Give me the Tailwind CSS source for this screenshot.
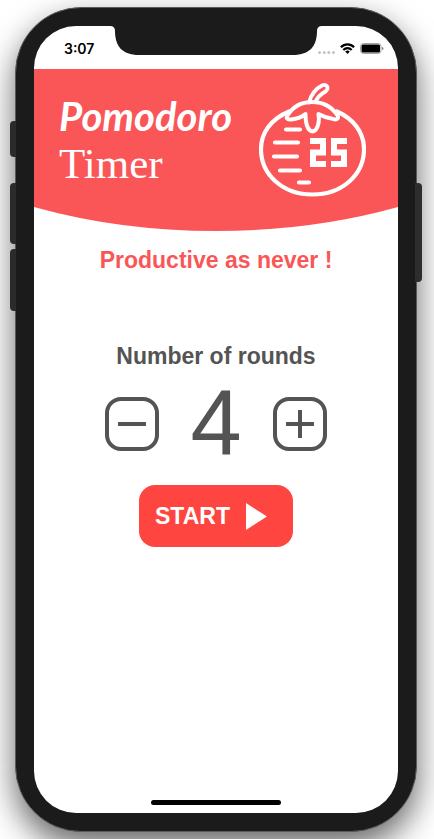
<!DOCTYPE html>
<html lang="en">
<head>
<meta charset="utf-8">
<meta name="viewport" content="width=device-width, initial-scale=1">
<title>Pomodoro Timer</title>
<script src="https://cdn.jsdelivr.net/npm/@tailwindcss/browser@4"></script>
</head>
<body class="flex min-h-screen overflow-hidden bg-white pt-[7px] pr-[17px] pb-[7px] pl-[15px] font-['Liberation_Sans',Arial,sans-serif] text-[#545454]">
<div class="relative flex flex-1 rounded-[66px] border border-[#5a5a5a] bg-[#1b1b1b] p-[18px] shadow-[0_14px_32px_rgba(0,0,0,0.6)]">
  <!-- side buttons -->
  <span class="absolute top-[113px] -left-[6px] h-9 w-[6px] rounded-l-sm bg-[#2b2b2b]"></span>
  <span class="absolute top-[175px] -left-[6px] h-[61px] w-[6px] rounded-l-sm bg-[#2b2b2b]"></span>
  <span class="absolute top-[241px] -left-[6px] h-[62px] w-[6px] rounded-l-sm bg-[#2b2b2b]"></span>
  <span class="absolute top-[175px] -right-[6px] h-[99px] w-[7px] rounded-r-sm bg-[#2d2d2d]"></span>

  <div class="relative flex flex-1 flex-col overflow-hidden rounded-[42px] bg-white">
    <svg class="absolute top-0 left-1/2 h-[29px] w-[212px] -translate-x-1/2" viewBox="0 0 212 29" fill="#1b1b1b" aria-hidden="true">
      <path d="M0 0H212Q207 0 207 5C207 20 200 29 183 29H29C12 29 5 20 5 5Q5 0 0 0Z"/>
    </svg>
    <div class="flex h-[43px] items-center justify-between pt-[2px] pr-[14px] pl-[30px]">
      <time class="font-['Inter','Liberation_Sans',sans-serif] text-[14px] font-semibold text-black">3:07</time>
      <div class="flex items-center gap-[5px]">
        <svg class="mt-[7px] h-[3px] w-[17px]" viewBox="0 0 17 3" fill="#c4c4c4" aria-hidden="true"><circle cx="1.5" cy="1.5" r="1.5"/><circle cx="6.2" cy="1.5" r="1.5"/><circle cx="10.8" cy="1.5" r="1.5"/><circle cx="15.5" cy="1.5" r="1.5"/></svg>
        <svg class="h-[11px] w-[15px]" viewBox="0 0 15 11" fill="none" stroke="#000" stroke-width="2.2" aria-hidden="true"><path d="M.9 4.2C4.600 .3 10.400 .3 14.100 4.200M3.300 6.900C5.700 4.400 9.300 4.400 11.700 6.900"/><path d="M5.200 8.500Q7.500 6.600 9.800 8.500L7.500 10.900Z" fill="#000" stroke="none"/></svg>
        <svg class="h-[11px] w-6" viewBox="0 0 24 11" aria-hidden="true"><rect x=".5" y=".5" width="20.500" height="10" rx="3" fill="none" stroke="#a2a2a2"/><rect x="1.500" y="1.500" width="18.500" height="8" rx="1.500"/><path d="M22 3.700Q23.500 4.300 23.500 5.500T22 7.300Z" fill="#8a8a8a"/></svg>
      </div>
    </div>

    <header class="flex h-[138px] items-start justify-between bg-[#fa5658] pr-8 pl-[25px] text-white">
      <h1 class="pt-[23px]">
        <span class="block font-['Lato',sans-serif] text-[40px] leading-[48px] font-bold italic">Pomodoro</span>
        <span class="block font-['Liberation_Serif',serif] text-[43px] leading-[48px] font-normal">Timer</span>
      </h1>
      <svg class="mt-[11px] h-[118px] w-[108px]" viewBox="258 80 108 118" fill="none" stroke="#fff" stroke-width="4.200" stroke-linecap="round" stroke-linejoin="round" aria-hidden="true">
        <path d="M289 111.500C271 119 261 133 261 149C261 175 283 194.500 312.500 194.500S364 175 364 149C364 133 354 119 337 111.500"/>
        <path d="M309 102.500C311 95 315 89 322 85.500C327 83.500 329.500 88 325.500 91.500C320 94.500 317 98 315.500 102" stroke-width="3.800"/>
        <path d="M287.500 115.500C293 106.500 302 102 312 102C323 102 332 107 337.500 115.500C339.500 119 336 120.500 331.500 118.500C326 117.500 322 116 318.500 114C319.500 120 318.500 127 315.500 130C313.500 131.800 311.500 131.800 309.500 130C306.500 127 305.500 120 305.500 114C301 118 296 119 291 119.500C287 120 285.800 118 287.500 115.500Z" stroke-width="4"/>
        <path d="M286 129.500H300M275 142.500H298M274 156.500H297M280 170.500H300M299 182.500H309"/>
        <path d="M310 141H323V152.500H313V164H326M347 141H334V152.500H344V164H331" stroke-width="6" stroke-linecap="butt" stroke-linejoin="miter"/>
      </svg>
    </header>
    <svg class="h-6 w-full shrink-0" viewBox="0 0 364 24" preserveAspectRatio="none" fill="#fa5658" aria-hidden="true"><path d="M0 0H364Q278 24 182 24T0 0Z"/></svg>

    <main class="flex flex-1 flex-col items-center text-[23px] leading-8 font-bold">
      <p class="mt-[13px] text-[#fa5658]">Productive as never !</p>
      <h2 class="mt-16" id="rounds">Number of rounds</h2>
      <div class="flex items-center gap-[31px]" role="group" aria-labelledby="rounds">
        <button type="button" aria-label="Fewer rounds" class="flex h-[54px] w-[54px] items-center justify-center rounded-[16px] border-4 border-[#545454]">
          <svg class="h-7 w-7" viewBox="0 0 28 28" stroke="#545454" stroke-width="4" aria-hidden="true"><path d="M0 14H28"/></svg>
        </button>
        <output class="pb-1 text-[92px] leading-[100px] font-normal">4</output>
        <button type="button" aria-label="More rounds" class="flex h-[54px] w-[54px] items-center justify-center rounded-[16px] border-4 border-[#545454]">
          <svg class="h-7 w-7" viewBox="0 0 28 28" stroke="#545454" stroke-width="4" aria-hidden="true"><path d="M0 14H28M14 0V28"/></svg>
        </button>
      </div>
      <button type="button" class="mt-[9px] flex h-[62px] items-center gap-4 rounded-[16px] bg-[#ff4540] pr-[26px] pl-4 text-white">
        START
        <svg class="h-[27px] w-[21px]" viewBox="0 0 21 27" fill="#fff" aria-hidden="true"><path d="M0 0L21 13.500L0 27Z"/></svg>
      </button>
    </main>
    <div class="mx-auto mb-2 h-[5px] w-[130px] rounded-full bg-black"></div>
  </div>
</div>
</body>
</html>
